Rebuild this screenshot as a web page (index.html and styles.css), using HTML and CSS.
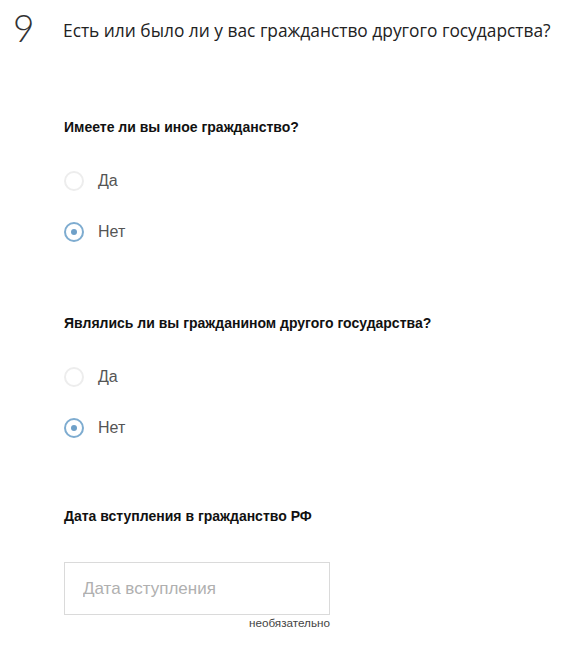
FILE: index.html
```html
<!DOCTYPE html>
<html lang="ru">
  <head>
    <meta charset="UTF-8" />
    <meta name="viewport" content="width=device-width, initial-scale=1.0" />
    <title>Гражданство</title>
    <link rel="stylesheet" href="styles.css">
  </head>
  <body>
    <div class="question">
      <div class="question-head">
        <span class="question-num">9</span>
        <h2 class="question-title">Есть или было ли у вас гражданство другого государства?</h2>
      </div>

      <div class="question-body">
        <div class="group">
          <div class="group-label">Имеете ли вы иное гражданство?</div>
          <label class="radio">
            <input type="radio" name="other" />
            <span class="radio-mark"></span>
            <span class="radio-text">Да</span>
          </label>
          <label class="radio">
            <input type="radio" name="other" checked />
            <span class="radio-mark"></span>
            <span class="radio-text">Нет</span>
          </label>
        </div>

        <div class="group">
          <div class="group-label">Являлись ли вы гражданином другого государства?</div>
          <label class="radio">
            <input type="radio" name="former" />
            <span class="radio-mark"></span>
            <span class="radio-text">Да</span>
          </label>
          <label class="radio">
            <input type="radio" name="former" checked />
            <span class="radio-mark"></span>
            <span class="radio-text">Нет</span>
          </label>
        </div>

        <div class="group">
          <div class="group-label">Дата вступления в гражданство РФ</div>
          <div class="field">
            <input type="text" class="field-input" placeholder="Дата вступления" />
            <div class="field-hint">необязательно</div>
          </div>
        </div>
      </div>
    </div>
  </body>
</html>
```

FILE: styles.css
```css
* {
  margin: 0;
  padding: 0;
  box-sizing: border-box;
}

body {
  background: #fff;
  color: #222;
  font-family: "Liberation Sans", Arial, sans-serif;
}

.question {
  width: 579px;
}

.question-head {
  display: flex;
  align-items: center;
  height: 40px;
  margin-top: 10px;
  padding-left: 13px;
}

.question-num {
  width: 50px;
  font-family: "Lato", sans-serif;
  font-weight: 300;
  font-style: normal;
  font-size: 37px;
  color: #333;
  line-height: 40px;
  margin-top: -4px;
}

.question-title {
  font-family: "Open Sans", sans-serif;
  font-weight: 400;
  font-size: 17.35px;
  color: #222;
  line-height: 40px;
}

.question-body {
  padding-left: 64px;
}

.group {
  margin-top: 67px;
}

.group + .group {
  margin-top: 69px;
}

.group:last-child {
  margin-top: 66px;
}

.group-label {
  font-weight: bold;
  font-size: 14px;
  line-height: 20px;
  color: #111;
  margin-bottom: 32px;
}

.radio {
  display: flex;
  align-items: center;
  height: 24px;
  margin-bottom: 27px;
  cursor: pointer;
}

.radio:last-child {
  margin-bottom: 0;
}

.radio input {
  display: none;
}

.radio-mark {
  width: 20px;
  height: 20px;
  border: 2px solid #ededed;
  border-radius: 50%;
  position: relative;
  margin-right: 14px;
}

.radio input:checked + .radio-mark {
  border-color: #7eacd0;
}

.radio input:checked + .radio-mark::after {
  content: "";
  position: absolute;
  top: 5px;
  left: 5px;
  width: 6px;
  height: 6px;
  border-radius: 50%;
  background: #6fa0c8;
}

.radio-text {
  font-size: 16px;
  color: #555;
}

.group:last-child .group-label {
  margin-bottom: 0;
}

.field {
  width: 266px;
  margin-top: 36px;
}

.field-input {
  display: block;
  width: 266px;
  height: 53px;
  border: 1px solid #dadada;
  padding: 0 18px;
  font-family: "Liberation Sans", Arial, sans-serif;
  font-size: 17px;
  color: #333;
  outline: none;
}

.field-input::placeholder {
  color: #b0b0b0;
}

.field-hint {
  text-align: right;
  font-size: 11.7px;
  line-height: 16px;
  color: #444;
}
```
